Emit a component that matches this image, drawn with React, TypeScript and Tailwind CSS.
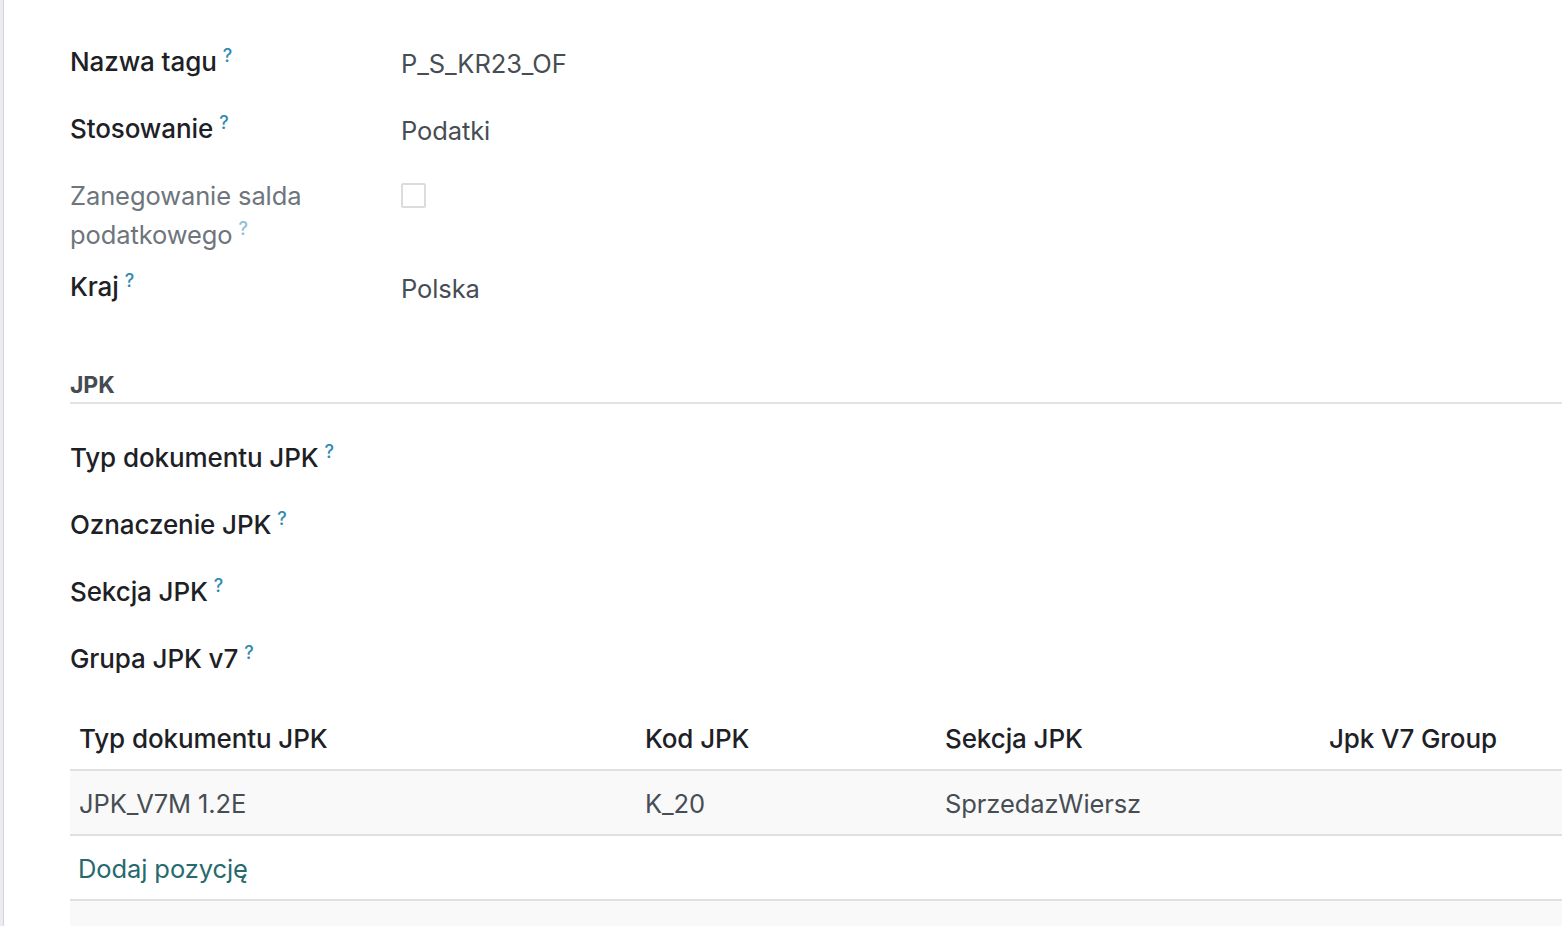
import React from 'react';

type Field = {
  label: string;
  value?: string;
  checkbox?: boolean;
  muted?: boolean;
};

const mainFields: Field[] = [
  { label: 'Nazwa tagu', value: 'P_S_KR23_OF' },
  { label: 'Stosowanie', value: 'Podatki' },
  { label: 'Zanegowanie salda podatkowego', checkbox: true, muted: true },
  { label: 'Kraj', value: 'Polska' },
];

const jpkFields = ['Typ dokumentu JPK', 'Oznaczenie JPK', 'Sekcja JPK', 'Grupa JPK v7'];

function Help({ muted }: { muted?: boolean }) {
  return (
    <sup className={`ml-[6px] text-[18px] font-medium ${muted ? 'text-[#8fbfd3]' : 'text-[#3389b0]'}`}>?</sup>
  );
}

function FieldRow({ field }: { field: Field }) {
  return (
    <div className="grid grid-cols-[331px_1fr] min-h-[67px]">
      <div
        className={`leading-[39px] pb-[13px] pr-6 ${
          field.muted ? 'text-[#6e757c] font-normal text-[25.5px]' : 'text-[#1d2126] font-medium text-[26px]'
        }`}
      >
        {field.label}
        <Help muted={field.muted} />
      </div>
      <div className="leading-[39px] pt-[2px] text-[#474d54]">
        {field.checkbox ? (
          <div className="mt-[5px] w-[25px] h-[25px] border-2 border-[#dcdcdc] rounded-[2px] bg-white" />
        ) : (
          field.value
        )}
      </div>
    </div>
  );
}

export default function App() {
  return (
    <div
      className="h-[926px] overflow-hidden bg-white flex text-[25.5px] tracking-[-0.1px]"
      style={{ fontFamily: 'Inter, "Noto Sans", sans-serif' }}
    >
      <div className="w-[3px] shrink-0 bg-[#ececf0] border-r border-[#d3d5d9] box-content" />

      <div className="flex-1 pl-[66px] pt-[42px]">
        {mainFields.map(f => (
          <FieldRow key={f.label} field={f} />
        ))}

        <div className="mt-[35px] border-b-2 border-[#e3e3e6] pb-[1px]">
          <h3 className="text-[23px] font-bold leading-[32px] text-[#464b53] uppercase">JPK</h3>
        </div>

        <div className="mt-[34px]">
          {jpkFields.map(l => (
            <FieldRow key={l} field={{ label: l }} />
          ))}
        </div>

        <div>
          <div className="grid grid-cols-[566px_300px_384px_1fr] h-[65px] pt-[2px] border-b-2 border-[#e0e0e4] items-center text-[#1d2126] font-medium text-[26px]">
            <div className="pl-[9px]">Typ dokumentu JPK</div>
            <div className="pl-[9px]">Kod JPK</div>
            <div className="pl-[9px]">Sekcja JPK</div>
            <div className="pl-[9px]">Jpk V7 Group</div>
          </div>
          <div className="grid grid-cols-[566px_300px_384px_1fr] h-[65px] pt-[4px] border-b-2 border-[#e0e0e4] items-center bg-[#f9f9f9] text-[#474d54]">
            <div className="pl-[9px]">JPK_V7M 1.2E</div>
            <div className="pl-[9px]">K_20</div>
            <div className="pl-[9px]">SprzedazWiersz</div>
            <div className="pl-[9px]" />
          </div>
          <div className="h-[65px] pt-[4px] border-b-2 border-[#e0e0e4] flex items-center">
            <a className="pl-[8px] text-[#26696e] cursor-pointer">Dodaj pozycję</a>
          </div>
          <div className="h-[65px] bg-[#f9f9f9]" />
        </div>
      </div>
    </div>
  );
}
